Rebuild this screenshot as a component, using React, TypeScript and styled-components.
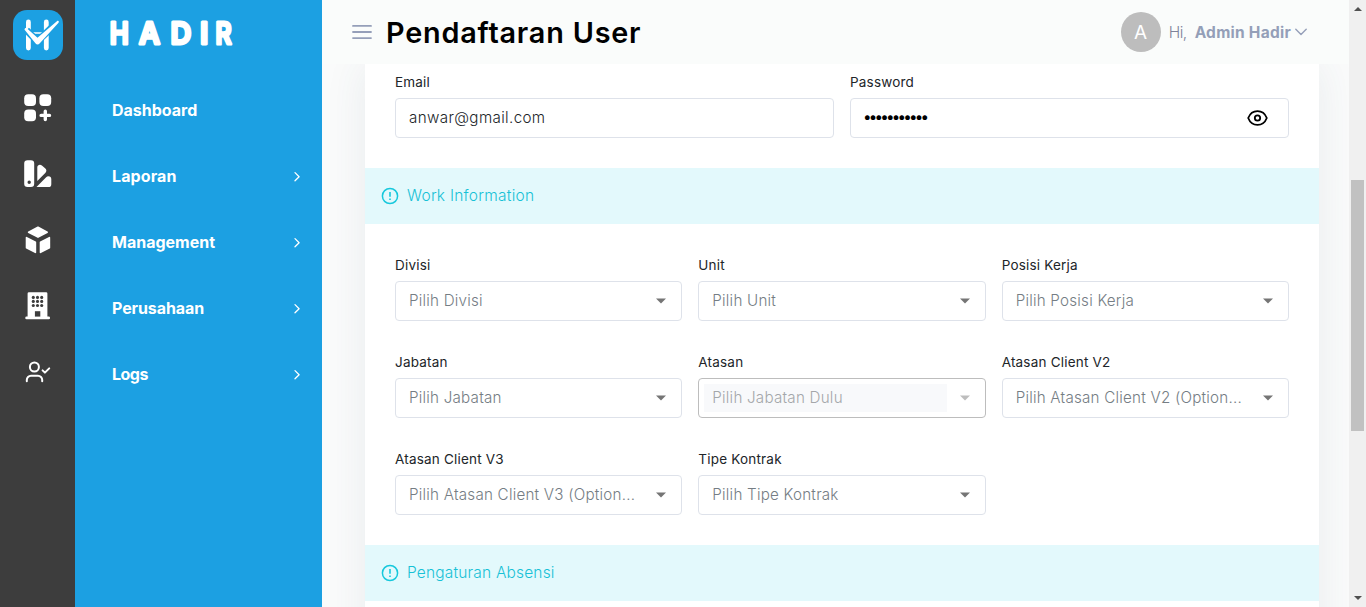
import React from "react";
import styled, { createGlobalStyle } from "styled-components";

const Global = createGlobalStyle`
  * { box-sizing: border-box; }
  body { margin: 0; overflow: hidden; background: #fafbfb; font-family: Inter, "Liberation Sans", sans-serif; }
`;

const Page = styled.div`
  display: flex;
  width: 1366px;
  height: 607px;
  overflow: hidden;
`;

const IconRail = styled.nav`
  width: 75px;
  flex: none;
  background: #3d3d3d;
  display: flex;
  flex-direction: column;
  align-items: center;
  padding-top: 10px;
`;

const Brand = styled.div`
  width: 50px;
  height: 50px;
  margin: 0 0 15px 1px;
  svg { display: block; }
`;

const RailItem = styled.div`
  height: 66px;
  display: flex;
  align-items: center;
  svg { display: block; }
`;

const Menu = styled.aside`
  width: 247px;
  flex: none;
  background: #1ca0e2;
  color: #fff;
`;

const Wordmark = styled.div`
  height: 77px;
  padding: 14px 0 0 30px;
  svg { display: block; }
`;

const MenuItem = styled.div`
  height: 66px;
  padding: 0 20px 0 37px;
  display: flex;
  align-items: center;
  justify-content: space-between;
  font-size: 16px;
  font-weight: 700;
`;

const Fit = styled.span<{ $ls?: number }>`
  letter-spacing: ${(p) => p.$ls ?? 0}px;
  white-space: nowrap;
`;

const Main = styled.main`
  flex: 1;
  min-width: 0;
  display: flex;
  flex-direction: column;
`;

const Header = styled.header`
  height: 64px;
  flex: none;
  display: flex;
  align-items: center;
  padding: 0 42px 0 30px;
  background: #fafcfb;
  position: relative;
`;

const Title = styled.h1`
  margin: 1px auto 0 14px;
  font-size: 28.8px;
  line-height: 36px;
  font-weight: 600;
  color: #000;
`;

const Avatar = styled.div`
  width: 40px;
  height: 40px;
  border-radius: 50%;
  background: #bdbdbd;
  color: #fff;
  font-size: 19px;
  line-height: 41px;
  text-align: center;
`;

const Greeting = styled.div`
  display: flex;
  margin-left: 8px;
  font-size: 15.5px;
  color: #7e8299;
  font-weight: 300;
  strong { margin: 0 4px 0 8px; color: #949fb8; font-weight: 700; }
`;

const Body = styled.div`
  flex: 1;
  min-height: 0;
  overflow: hidden;
  padding: 0 30px 0 43px;
`;

const Card = styled.section`
  height: 620px;
  background: #fff;
  box-shadow: 0 0 40px rgba(60, 80, 100, 0.09);
`;

const Fields = styled.div<{ $cols: number; $top: number }>`
  display: grid;
  grid-template-columns: repeat(${(p) => p.$cols}, 1fr);
  gap: 31px 16px;
  padding: ${(p) => p.$top}px 30px 30px;
`;

const Label = styled.label`
  display: block;
  height: 20px;
  line-height: 20px;
  margin-bottom: 6px;
  font-size: 13.5px;
  letter-spacing: 0.2px;
  color: #212529;
`;

const Control = styled.div<{ $disabled?: boolean }>`
  height: 40px;
  border: 1px solid ${(p) => (p.$disabled ? "#bdbdbd" : "#dee2ea")};
  border-radius: 4px;
  display: flex;
  align-items: center;
  justify-content: space-between;
  padding: 0 15px 0 5px;
  font-size: 15.2px;
  font-weight: 300;
  svg { display: block; flex: none; }
`;

const Value = styled.div<{ $tone: "value" | "hint" | "disabled" }>`
  height: 28px;
  width: 243px;
  padding-left: 8px;
  line-height: 27px;
  white-space: nowrap;
  letter-spacing: ${(p) => (p.$tone === "value" ? 0.36 : 0.22)}px;
  color: ${(p) => ({ value: "#212529", hint: "#757d84", disabled: "#a4a7aa" })[p.$tone]};
  background: ${(p) => (p.$tone === "disabled" ? "#f8f9fb" : "transparent")};
`;

const Bullets = styled.span`
  display: block;
  margin: -1px 0 0 -1px;
  letter-spacing: -2.8px;
  color: #000;
  font-weight: 400;
`;

const EyeSlot = styled.span`
  margin-right: 5.5px;
`;

const Banner = styled.div`
  height: 56px;
  background: #e3f9fc;
  display: flex;
  align-items: center;
  padding-left: 16px;
  gap: 8px;
  color: #17c1d6;
  font-size: 15.5px;
  font-weight: 300;
  span { margin-top: -2px; }
`;

const Scrollbar = styled.div`
  width: 17px;
  flex: none;
  background: #f0f0f0;
  display: flex;
  flex-direction: column;
  align-items: center;
  padding: 7px 0 7px;
  svg { display: block; }
`;

const Thumb = styled.div`
  width: 13px;
  height: 251px;
  margin: 169px 0 auto;
  background: #c1c1c1;
`;

const BrandIcon = () => (
  <svg width="50" height="50" viewBox="13 10 50 50">
    <rect x="13" y="10" width="50" height="50" rx="14" fill="#1ca0e2" />
    <g fill="none" strokeLinecap="round">
      <path d="M28.4 22v26M46.3 22v26" stroke="#fff" strokeWidth="4.8" />
      <path d="M31 33h13" stroke="#fff" strokeWidth="1.6" />
      <path d="M26.5 30.3 37.5 41.3 57 22.5" stroke="#1ca0e2" strokeWidth="7" strokeLinecap="butt" />
    </g>
    <path d="M24.9 28.4c.7-.6 1.5-.4 2.2.2l10.4 9.2L56.9 21.3c1.5-1.2 2.7.3 1.4 1.8L39.8 43.2c-1.5 1.6-3 1.6-4.4 0L25.2 30.6c-.7-.8-.9-1.6-.3-2.2Z" fill="#fff" />
  </svg>
);

const GridIcon = () => (
  <svg width="28" height="28" viewBox="0 0 28 28" fill="#fff">
    <rect x=".2" y=".2" width="11.8" height="11.8" rx="4" />
    <rect x="15.4" y=".2" width="11.8" height="11.8" rx="4" />
    <rect x=".2" y="15.4" width="11.8" height="11.8" rx="4" />
    <path d="M21.3 17.2v8.4M17.1 21.4h8.4" stroke="#fff" strokeWidth="3.4" strokeLinecap="round" />
  </svg>
);

const SwatchIcon = () => (
  <svg width="28" height="28" viewBox="0 0 28 28" fill="#fff">
    <path fillRule="evenodd" d="M3.5.2h3.4a3.3 3.3 0 0 1 3.3 3.3v20.3a3.3 3.3 0 0 1-3.3 3.3H3.5a3.3 3.3 0 0 1-3.3-3.3V3.5A3.3 3.3 0 0 1 3.5.2ZM5.2 20.6a1.7 1.7 0 1 0 0 3.4 1.7 1.7 0 0 0 0-3.4Z" />
    <path d="M13.3 7.2c0-2.2 2.7-3.4 4.6-1.8l3.2 2.8c1.6 1.4 1.7 3 .4 4.5L13.3 21Z" />
    <path d="m12.5 27.1 9.4-9.7c.8-.8 1.6-1.1 2.5-1.1a2.9 2.9 0 0 1 2.9 2.9v5a2.9 2.9 0 0 1-2.9 2.9Z" />
  </svg>
);

const CubeIcon = () => (
  <svg width="26" height="28" viewBox="0 0 26 28" fill="#fff" stroke="#fff" strokeWidth="1.6" strokeLinejoin="round">
    <path d="M13 1.2 22.2 6.2 13 11.1 3.6 6.2Z" />
    <path d="M1.5 11.6 10.4 16.3V26.4L1.5 21.8Z" />
    <path d="M24.4 11.6 15.5 16.3V26.4l8.9-4.6Z" />
  </svg>
);

const BuildingIcon = () => (
  <svg width="26" height="28" viewBox="0 0 26 28">
    <path d="M3.9.3h17.2a1.3 1.3 0 0 1 1.3 1.3v23h1.3a1.35 1.35 0 0 1 0 2.7H1.6a1.35 1.35 0 0 1 0-2.7h1V1.6A1.3 1.3 0 0 1 3.9.3Z" fill="#fff" />
    <g fill="#3d3d3d">
      {[5.4, 9.4, 13.5].map((y) =>
        [8.3, 12.5, 16.7].map((x) => <circle key={`${x}-${y}`} cx={x} cy={y} r="1.55" />)
      )}
      <path d="M9.9 19.2h5.4v5.4H9.9Z" />
    </g>
  </svg>
);

const UserCheckIcon = () => (
  <svg width="26" height="22" viewBox="0 0 26 22" fill="none" stroke="#fff" strokeWidth="2" strokeLinecap="round" strokeLinejoin="round">
    <circle cx="9.4" cy="6" r="4.5" />
    <path d="M1.8 20.2v-1.3a4.2 4.2 0 0 1 4.2-4.2h7a4.2 4.2 0 0 1 4.2 4.2v1.3M17.6 9.4l2.3 2.2 4.3-4.2" />
  </svg>
);

const Chevron = () => (
  <svg width="10" height="12" viewBox="0 0 10 12" fill="none" stroke="#fff" strokeWidth="1.3" strokeLinecap="round" strokeLinejoin="round">
    <path d="m3 2.6 4.1 4.1L3 10.8" />
  </svg>
);

const Caret = ({ disabled }: { disabled?: boolean }) => (
  <svg width="10" height="6" viewBox="0 0 10 6">
    <path d="M0 .5h10l-5 5Z" fill={disabled ? "#bdbdbd" : "#757575"} />
  </svg>
);

const InfoIcon = () => (
  <svg width="18" height="18" viewBox="0 0 18 18" fill="none" stroke="#17c8dc">
    <circle cx="9" cy="9" r="7.6" strokeWidth="1.5" />
    <path d="M9 5v4.7M9 11.4v1.6" strokeWidth="1.6" />
  </svg>
);

const EyeIcon = () => (
  <svg width="21" height="16" viewBox="0 0 21 16" fill="none" stroke="#000" strokeWidth="1.8">
    <path d="M1.2 8C2.9 3.7 6.4 1.1 10.5 1.1S18.1 3.7 19.8 8c-1.7 4.3-5.2 6.9-9.3 6.9S2.9 12.3 1.2 8Z" />
    <circle cx="10.5" cy="8" r="2.7" />
  </svg>
);

const menu: [string, number][] = [
  ["Dashboard", 0],
  ["Laporan", 0.1],
  ["Management", 0],
  ["Perusahaan", -0.1],
  ["Logs", -0.5],
];

const selects: [string, string, boolean?][] = [
  ["Divisi", "Pilih Divisi"],
  ["Unit", "Pilih Unit"],
  ["Posisi Kerja", "Pilih Posisi Kerja"],
  ["Jabatan", "Pilih Jabatan"],
  ["Atasan", "Pilih Jabatan Dulu", true],
  ["Atasan Client V2", "Pilih Atasan Client V2 (Option..."],
  ["Atasan Client V3", "Pilih Atasan Client V3 (Option..."],
  ["Tipe Kontrak", "Pilih Tipe Kontrak"],
];

export default function App() {
  return (
    <Page>
      <Global />
      <IconRail>
        <Brand><BrandIcon /></Brand>
        {[GridIcon, SwatchIcon, CubeIcon, BuildingIcon, UserCheckIcon].map((Icon, i) => (
          <RailItem key={i}><Icon /></RailItem>
        ))}
      </IconRail>
      <Menu>
        <Wordmark>
          <svg width="140" height="40" viewBox="105 14 140 40">
            <g fontSize="30" fontWeight="600" fill="#fff" stroke="#fff" strokeWidth="3" strokeLinejoin="round">
              <text transform="translate(109.8 44) scale(.85 1)">H</text>
              <text transform="translate(138.9 44) scale(.96 1)">A</text>
              <text transform="translate(170.5 44) scale(.96 1)">D</text>
              <text transform="translate(199.9 44)">I</text>
              <text transform="translate(215.5 44) scale(.82 1)">R</text>
            </g>
          </svg>
        </Wordmark>
        {menu.map(([name, ls], i) => (
          <MenuItem key={name}>
            <Fit $ls={ls}>{name}</Fit>
            {i > 0 && <Chevron />}
          </MenuItem>
        ))}
      </Menu>
      <Main>
        <Header>
          <svg width="20" height="16" viewBox="0 0 20 16" stroke="#959fb9" strokeWidth="1.8" strokeLinecap="round">
            <path d="M1 1.9h18M1 8h18M1 14.1h18" />
          </svg>
          <Title><Fit $ls={0.8}>Pendaftaran User</Fit></Title>
          <Avatar>A</Avatar>
          <Greeting>
            <Fit $ls={-0.5}>Hi,</Fit>
            <strong><Fit $ls={0.26}>Admin Hadir</Fit></strong>
          </Greeting>
          <svg width="12" height="8" viewBox="0 0 12 8" fill="none" stroke="#959fb9" strokeWidth="1.4" strokeLinecap="round" strokeLinejoin="round">
            <path d="m.8 1.3 5.2 5.2 5.2-5.2" />
          </svg>
        </Header>
        <Body>
          <Card>
            <Fields $cols={2} $top={8}>
              <div>
                <Label>Email</Label>
                <Control><Value $tone="value">anwar@gmail.com</Value></Control>
              </div>
              <div>
                <Label>Password</Label>
                <Control>
                  <Value $tone="value"><Bullets>•••••••••••</Bullets></Value>
                  <EyeSlot><EyeIcon /></EyeSlot>
                </Control>
              </div>
            </Fields>
            <Banner><InfoIcon /><Fit $ls={0.25}>Work Information</Fit></Banner>
            <Fields $cols={3} $top={31}>
              {selects.map(([label, hint, disabled]) => (
                <div key={label}>
                  <Label>{label}</Label>
                  <Control $disabled={disabled}>
                    <Value $tone={disabled ? "disabled" : "hint"}>{hint}</Value>
                    <Caret disabled={disabled} />
                  </Control>
                </div>
              ))}
            </Fields>
            <Banner><InfoIcon /><Fit $ls={0.18}>Pengaturan Absensi</Fit></Banner>
          </Card>
        </Body>
      </Main>
      <Scrollbar>
        <svg width="8" height="4" viewBox="0 0 8 4"><path d="M0 4 4 0l4 4Z" fill="#505050" /></svg>
        <Thumb />
        <svg width="8" height="4" viewBox="0 0 8 4"><path d="M0 0h8L4 4Z" fill="#505050" /></svg>
      </Scrollbar>
    </Page>
  );
}
